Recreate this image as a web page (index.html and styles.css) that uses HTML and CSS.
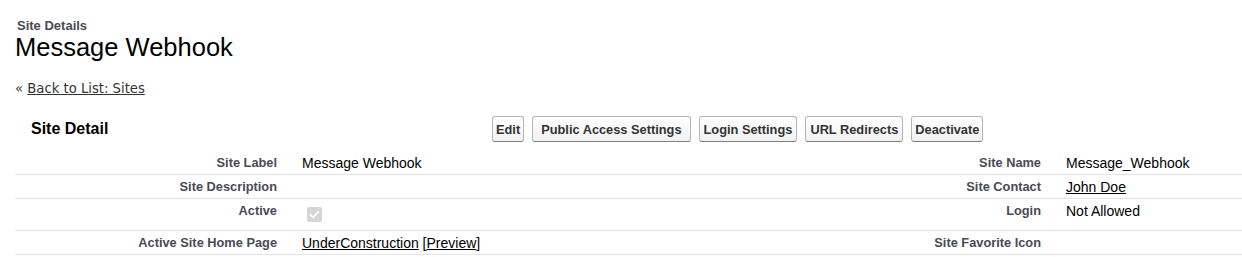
FILE: index.html
```html
<!DOCTYPE html>
<html>
<head>
    <title>Site Details: Message Webhook</title>
    <link rel="stylesheet" href="styles.css">
</head>
<body>
    <div class="page">
        <div class="page-header">
            <div class="page-type">Site Details</div>
            <h1 class="page-title">Message Webhook</h1>
        </div>

        <div class="breadcrumb">&laquo;&nbsp;<a href="#">Back to List: Sites</a></div>

        <div class="block">
            <div class="block-header">
                <h2 class="block-title">Site Detail</h2>
                <div class="block-buttons">
                    <button class="btn">Edit</button>
                    <button class="btn btn-wide">Public Access Settings</button>
                    <button class="btn btn-mid">Login Settings</button>
                    <button class="btn btn-mid">URL Redirects</button>
                    <button class="btn">Deactivate</button>
                </div>
            </div>

            <div class="detail-list">
                <div class="label">Site Label</div>
                <div class="data">Message Webhook</div>
                <div class="label">Site Name</div>
                <div class="data">Message_Webhook</div>

                <div class="label">Site Description</div>
                <div class="data"></div>
                <div class="label">Site Contact</div>
                <div class="data"><a href="#">John Doe</a></div>

                <div class="label tall">Active</div>
                <div class="data tall"><span class="checkbox checked disabled"><svg viewBox="0 0 15 15" width="15" height="15"><path d="M3.5 7.8 L6.2 10.4 L11.5 4.6" fill="none" stroke="#fff" stroke-width="1.8" stroke-linecap="round" stroke-linejoin="round"/></svg></span></div>
                <div class="label tall">Login</div>
                <div class="data tall">Not Allowed</div>

                <div class="label">Active Site Home Page</div>
                <div class="data"><a href="#">UnderConstruction</a> [<a href="#">Preview</a>]</div>
                <div class="label">Site Favorite Icon</div>
                <div class="data"></div>
            </div>
        </div>
    </div>
</body>
</html>
```

FILE: styles.css
```css
body {
    margin: 0;
    background: #fff;
    font-family: 'Liberation Sans', Arial, sans-serif;
    color: #000;
}

.page {
    padding: 18px 0 0 15px;
}

.page-type {
    padding-left: 2px;
    font-size: 13px;
    line-height: 16px;
    font-weight: bold;
    color: #4a4a56;
}

.page-title {
    margin: 0;
    font-size: 25.5px;
    line-height: 27px;
    font-weight: normal;
    color: #000;
}

.breadcrumb {
    margin-top: 20px;
    font-family: 'DejaVu Sans', Verdana, sans-serif;
    font-size: 13.2px;
    line-height: 16px;
    color: #333;
}

.breadcrumb a {
    color: #333;
    text-decoration: underline;
}

.block-header {
    display: flex;
    align-items: center;
    margin-top: 19px;
    height: 26px;
}

.block-title {
    flex: 0 0 477px;
    box-sizing: border-box;
    margin: 0;
    padding-left: 16px;
    font-size: 16px;
    font-weight: bold;
    color: #000;
}

.block-buttons {
    display: flex;
    gap: 8px;
}

.btn {
    height: 26px;
    padding: 0 3px;
    font-family: 'Liberation Sans', Arial, sans-serif;
    font-size: 12.8px;
    font-weight: bold;
    color: #333;
    background: linear-gradient(#fff, #f1f1f1);
    border: 1px solid #b5b5b5;
    border-bottom-color: #7f7f7f;
    border-radius: 3px;
    cursor: pointer;
}

.btn-wide {
    padding: 0 8px;
}

.btn-mid {
    padding: 0 4px;
}

.detail-list {
    display: grid;
    grid-template-columns: 274px 489px 275px 1fr;
    margin-top: 9px;
}

.label,
.data {
    padding: 5px 0 4px;
    line-height: 14px;
    min-height: 14px;
    border-bottom: 1px solid #e3e3e3;
}

.label {
    padding-right: 12px;
    text-align: right;
    font-size: 12.8px;
    font-weight: bold;
    color: #4a4a56;
}

.data {
    padding-left: 13px;
    font-size: 14px;
    color: #000;
}

.data a {
    color: #000;
    text-decoration: underline;
}

.tall {
    min-height: 22px;
}

.checkbox {
    display: inline-block;
    width: 15px;
    height: 15px;
    margin: 3px 0 0 5px;
    border-radius: 2px;
    vertical-align: top;
}

.checkbox.checked.disabled {
    background: #d6d6d6;
}

.checkbox svg {
    display: block;
}
```
